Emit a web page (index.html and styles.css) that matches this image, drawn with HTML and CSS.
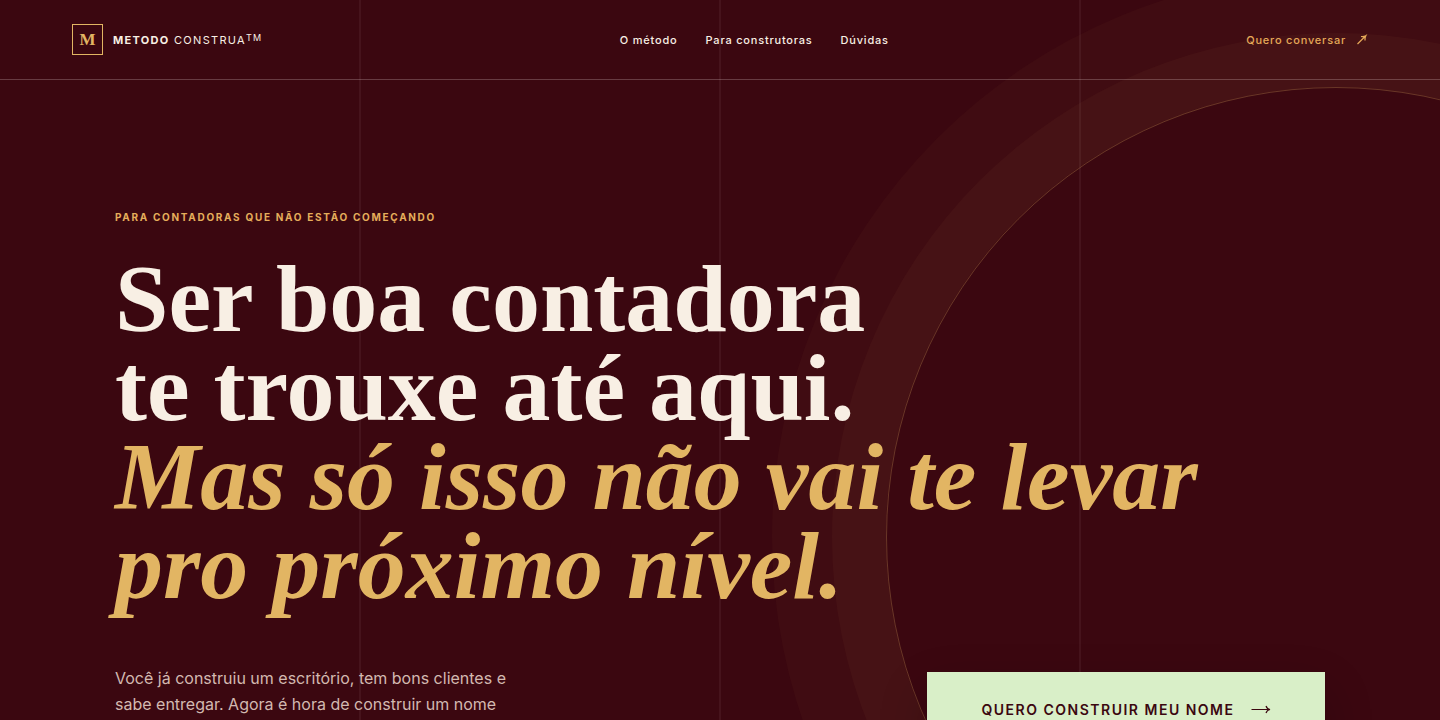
FILE: index.html
```html
<!DOCTYPE html>
<html lang="pt-BR">
<head>
  <meta charset="UTF-8" />
  <meta name="viewport" content="width=device-width, initial-scale=1" />
  <title>Metodo Construa</title>
  <link rel="stylesheet" href="styles.css">
</head>
<body>
  <div class="page">
    <div class="grid-lines" aria-hidden="true"><span></span><span></span><span></span><span></span></div>
    <div class="orbit" aria-hidden="true"></div>

    <header class="header">
      <a class="brand" href="#">
        <span class="brand-mark">M</span>
        <span class="brand-name"><strong>METODO</strong> CONSTRUA<sup>TM</sup></span>
      </a>
      <nav class="nav">
        <a href="#metodo">O método</a>
        <a href="#construtoras">Para construtoras</a>
        <a href="#duvidas">Dúvidas</a>
      </nav>
      <a class="header-cta" href="#contato">
        Quero conversar
        <svg width="12" height="12" viewBox="0 0 12 12" fill="none" stroke="currentColor" stroke-width="1.2" aria-hidden="true">
          <path d="M1.5 10 L9.5 2 M5 2.5 Q8 2.8 9.8 1.7 Q8.8 3.5 9 6.5" />
        </svg>
      </a>
    </header>

    <main class="hero">
      <p class="eyebrow">PARA CONTADORAS QUE NÃO ESTÃO COMEÇANDO</p>
      <h1>Ser boa contadora<br>te trouxe até aqui.<br><em>Mas só isso não vai te levar<br>pro próximo nível.</em></h1>
      <div class="hero-bottom">
        <p class="lead">Você já construiu um escritório, tem bons clientes e sabe entregar. Agora é hora de construir um nome</p>
        <a class="button" href="#contato">
          QUERO CONSTRUIR MEU NOME
          <svg width="20" height="10" viewBox="0 0 20 10" fill="none" stroke="currentColor" stroke-width="1.2" aria-hidden="true">
            <path d="M0.5 5.5 H18.5 M15 2 Q16 5 19 5.5 Q16 6 15 9" />
          </svg>
        </a>
      </div>
    </main>
  </div>
</body>
</html>
```
FILE: styles.css
```css
* {
  box-sizing: border-box;
}

body {
  margin: 0;
  background: #3b0710;
  color: #f8efe4;
  font-family: Inter, "Liberation Sans", sans-serif;
}

a {
  color: inherit;
  text-decoration: none;
}

.page {
  position: relative;
  min-height: 100vh;
  overflow: hidden;
}

/* Background decoration */
.grid-lines {
  position: absolute;
  inset: 0;
  display: grid;
  grid-template-columns: repeat(4, 1fr);
}

.grid-lines span + span {
  margin-left: -1px;
  border-left: 2px solid rgba(255, 225, 225, 0.06);
}

.orbit {
  position: absolute;
  top: 87px;
  right: -346px;
  width: 900px;
  height: 900px;
  border: 1px solid rgba(226, 181, 99, 0.28);
  border-radius: 50%;
  box-shadow: 0 0 0 54px rgba(226, 181, 99, 0.04), 0 0 0 114px rgba(226, 181, 99, 0.03);
}

.header {
  position: relative;
  display: flex;
  align-items: center;
  justify-content: space-between;
  height: 80px;
  padding: 0 72px;
  border-bottom: 1px solid rgba(248, 225, 225, 0.24);
}

.brand {
  display: flex;
  align-items: center;
  gap: 10px;
}

.brand-mark {
  display: grid;
  place-items: center;
  width: 31px;
  height: 31px;
  border: 1px solid #e2b563;
  color: #e2b563;
  font-family: "Liberation Serif", serif;
  font-size: 17px;
  font-weight: 700;
}

.brand-name {
  font-size: 11px;
  line-height: 16px;
  letter-spacing: 1.3px;
}

.brand-name sup {
  font-size: 9px;
  line-height: 0;
  vertical-align: 3px;
}

.nav {
  display: flex;
  gap: 28px;
  font-size: 11px;
  font-weight: 500;
  letter-spacing: 0.8px;
}

.header-cta {
  display: flex;
  align-items: center;
  gap: 10px;
  color: #e5a958;
  font-size: 11px;
  font-weight: 500;
  letter-spacing: 0.8px;
}

.hero {
  position: relative;
  max-width: 1210px;
  margin: 0 auto;
  padding: 130px 0 40px;
}

.eyebrow {
  margin: 0;
  color: #e5ae5b;
  font-size: 10px;
  font-weight: 700;
  line-height: 15px;
  letter-spacing: 1.7px;
}

h1 {
  margin: 29px 0 0;
  font-family: "Liberation Serif", serif;
  font-size: 96px;
  font-weight: 700;
  line-height: 89px;
}

h1 em {
  color: #e2b563;
}

.hero-bottom {
  display: flex;
  align-items: flex-end;
  justify-content: space-between;
  margin-top: 55px;
}

.lead {
  max-width: 410px;
  margin: 0;
  padding-bottom: 29px;
  color: #d3b9b0;
  font-size: 16px;
  line-height: 26px;
}

.button {
  display: flex;
  align-items: center;
  justify-content: center;
  gap: 16px;
  width: 398px;
  height: 74px;
  background: #d9efc8;
  box-shadow: 0 20px 50px rgba(0, 0, 0, 0.2);
  color: #3b0710;
  font-size: 14px;
  font-weight: 600;
  letter-spacing: 1.5px;
}

/* Responsive */
@media (max-width: 1240px) {
  .hero {
    padding: 80px 24px 40px;
  }

  h1 {
    font-size: 56px;
    line-height: 56px;
  }
}

@media (max-width: 800px) {
  .header {
    padding: 0 24px;
  }

  .nav {
    display: none;
  }

  .hero-bottom {
    flex-direction: column;
    align-items: stretch;
  }

  .button {
    width: 100%;
  }
}
```
